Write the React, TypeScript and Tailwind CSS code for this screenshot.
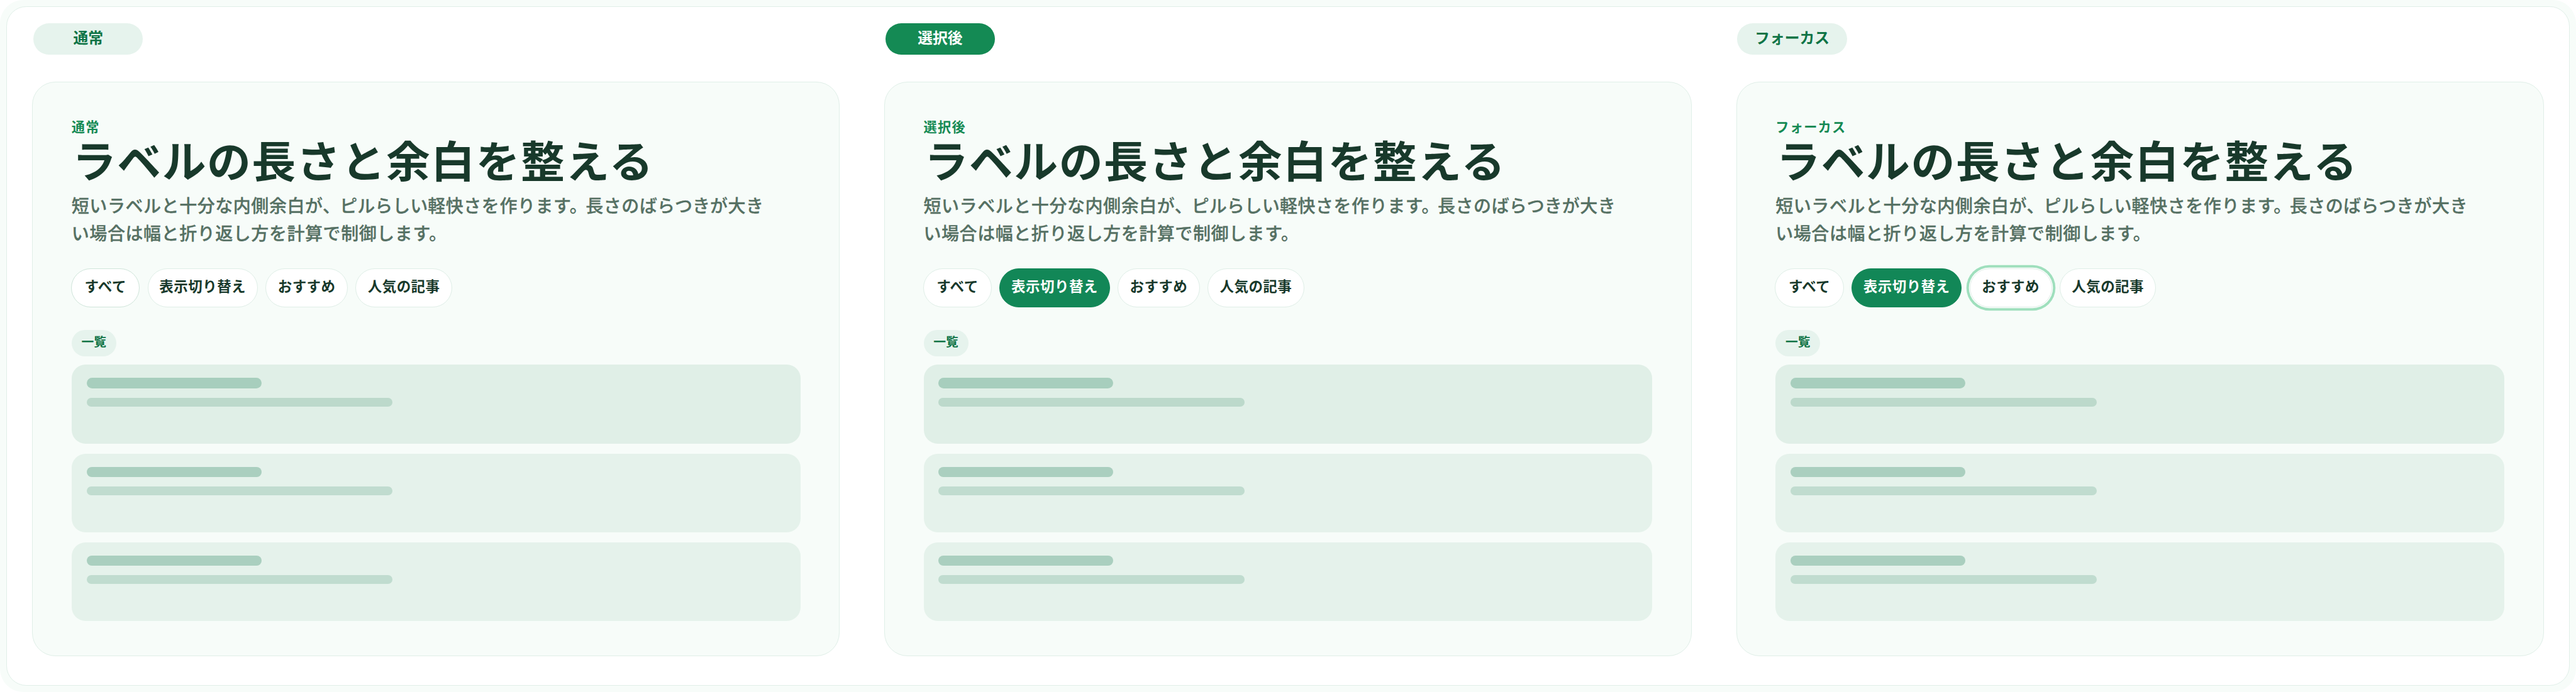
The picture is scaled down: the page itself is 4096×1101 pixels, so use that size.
import clsx from "clsx";

type Chip = { label: string; width: string };

const chips: Chip[] = [
  { label: "すべて", width: "w-[109.4px]" },
  { label: "表示切り替え", width: "w-[175.3px]" },
  { label: "おすすめ", width: "w-[131.2px]" },
  { label: "人気の記事", width: "w-[153.5px]" },
];

const states = [
  { title: "通常", filled: false, hovered: 0, selected: -1, focused: -1 },
  { title: "選択後", filled: true, hovered: -1, selected: 1, focused: -1 },
  { title: "フォーカス", filled: false, hovered: -1, selected: 1, focused: 2 },
];

const FilterChip = ({
  chip,
  hovered,
  selected,
  focused,
}: {
  chip: Chip;
  hovered: boolean;
  selected: boolean;
  focused: boolean;
}) => {
  return (
    <button
      className={clsx(
        "flex h-[62.2px] shrink-0 items-center justify-center whitespace-nowrap rounded-full border pb-[7.6px] text-[22.5px] font-bold tracking-[0.02em]",
        chip.width,
        selected
          ? "border-[#128757] bg-[#128757] text-white"
          : "bg-white text-[#18392b]",
        !selected && (hovered ? "border-[#cfe5da]" : "border-[#dfeee7]"),
        focused && "shadow-[0_0_0_1.3px_#ffffff,0_0_0_5.3px_#9fdfbd]"
      )}
    >
      {chip.label}
    </button>
  );
};

const ListRow = ({ active }: { active: boolean }) => {
  return (
    <div
      className={clsx(
        "flex h-[125.3px] flex-col gap-[15.1px] rounded-[22px] pl-[23.8px] pt-[21px]",
        active ? "bg-[#e0efe7]" : "bg-[#e5f2eb]"
      )}
    >
      <div
        className={clsx(
          "h-[16.4px] w-[278.2px] rounded-full",
          active ? "bg-[#a7cebd]" : "bg-[#aacfbf]"
        )}
      />
      <div
        className={clsx(
          "h-[13.8px] w-[486.6px] rounded-full",
          active ? "bg-[#bcd9cb]" : "bg-[#c0dccf]"
        )}
      />
    </div>
  );
};

const StateColumn = ({
  title,
  filled,
  hovered,
  selected,
  focused,
}: {
  title: string;
  filled: boolean;
  hovered: number;
  selected: number;
  focused: number;
}) => {
  return (
    <section className="flex w-[1284.3px] shrink-0 flex-col">
      <div
        className={clsx(
          "ml-[1.8px] flex h-[50.3px] w-[174.6px] items-center justify-center rounded-full pb-[7px] text-[23.8px] font-bold",
          filled ? "bg-[#148a54] text-white" : "bg-[#e6f3ed] text-[#0f7446]"
        )}
      >
        {title}
      </div>
      <div className="mt-[43px] h-[914.2px] rounded-[37px] border border-[#e0efe8] bg-[#f7fcf9] px-[61.7px] pt-[57.3px]">
        <p className="text-[21.2px] font-bold leading-[24px] tracking-[0.06em] text-[#158a54]">
          {title}
        </p>
        <h2 className="ml-[1.3px] mt-[0.5px] whitespace-nowrap text-[69.9px] font-bold leading-[80px] tracking-[0.02em] text-[#18392b]">
          ラベルの長さと余白を整える
        </h2>
        <p className="mt-[12.4px] whitespace-nowrap text-[28px] font-medium leading-[43.5px] tracking-[0.02em] text-[#557063] [-webkit-text-stroke:0.3px_#557063]">
          短いラベルと十分な内側余白が<span className="-mr-[1.5px]">、</span>
          <span className="tracking-normal">ピルらしい</span>
          軽快さを作ります<span className="-mr-[3.2px]">。</span>
          長さの<span className="tracking-normal">ばらつき</span>が大き
          <br />
          い場合は幅と折り返し方を計算で制御します。
        </p>
        <div className="-ml-[0.8px] mt-[34.7px] flex gap-[12.2px]">
          {chips.map((chip, index) => (
            <FilterChip
              key={chip.label}
              chip={chip}
              hovered={index === hovered}
              selected={index === selected}
              focused={index === focused}
            />
          ))}
        </div>
        <div className="mt-[35.3px] flex h-[42.6px] w-[71.1px] items-center justify-center rounded-full bg-[#e6f3ed] pb-[6px] text-[19.8px] font-bold text-[#0f7446]">
          一覧
        </div>
        <div className="mt-[13px] flex flex-col gap-4">
          <ListRow active />
          <ListRow active={false} />
          <ListRow active={false} />
        </div>
      </div>
    </section>
  );
};

const App = () => {
  return (
    <div className="h-[1101px] w-[4096px] bg-white font-['Noto_Sans_CJK_JP',sans-serif]">
      <div className="h-full rounded-[37px] bg-[#f7fcf9] p-[9.9px]">
        <main className="flex h-[1080.9px] gap-[70.45px] rounded-[31.7px] border border-[#e0efe8] bg-white pl-[40.2px] pt-[26.1px]">
          {states.map((state) => (
            <StateColumn key={state.title} {...state} />
          ))}
        </main>
      </div>
    </div>
  );
};

export default App;
